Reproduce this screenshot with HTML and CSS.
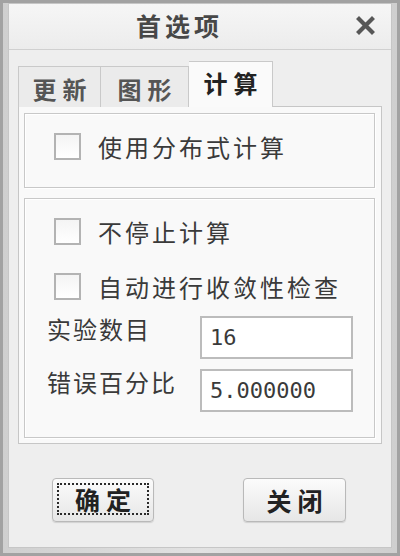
FILE: index.html
```html
<!DOCTYPE html>
<html lang="zh">
<head>
<meta charset="utf-8">
<title>首选项</title>
<link rel="stylesheet" href="styles.css">
</head>
<body>
<div class="window">
  <div class="dialog">
    <div class="titlebar">
      <div class="title"><span class="sp">首选项</span></div>
      <svg class="close" width="19" height="19" viewBox="0 0 19 19"><path d="M3 3 L16 16 M16 3 L3 16" stroke="#575757" stroke-width="4.2" stroke-linecap="square" fill="none"/></svg>
    </div>
    <div class="tabs">
      <div class="tab t1"><span class="sp">更新</span></div>
      <div class="tab t2"><span class="sp">图形</span></div>
      <div class="tab active"><span class="sp">计算</span></div>
    </div>
    <div class="panel">
      <div class="group g1">
        <div class="check"><span class="box"></span><span class="label">使用分布式计算</span></div>
      </div>
      <div class="group g2">
        <div class="check"><span class="box"></span><span class="label">不停止计算</span></div>
        <div class="check c2"><span class="box"></span><span class="label">自动进行收敛性检查</span></div>
        <div class="field f1"><span class="flabel">实验数目</span><span class="input">16</span></div>
        <div class="field f2"><span class="flabel">错误百分比</span><span class="input">5.000000</span></div>
      </div>
    </div>
    <div class="buttons">
      <div class="btn ok"><span class="focus"><span class="sp">确定</span></span></div>
      <div class="btn close-btn"><span class="sp">关闭</span></div>
    </div>
  </div>
</div>
</body>
</html>
```
FILE: styles.css
```css
html, body {
  margin: 0;
  padding: 0;
  background: #a0a0a0;
}
.window {
  width: 400px;
  height: 556px;
  box-sizing: border-box;
  border: 3px solid #a2a2a2;
  padding: 0 5px 5px;
  background: linear-gradient(to right, #cfcfcf, #e2e2e2 50%, #cfcfcf);
  display: flex;
  font-family: "Noto Sans CJK SC", "Noto Sans", sans-serif;
  color: #363636;
}
.dialog {
  flex: 1;
  border: 1px solid #c6c6c6;
  background: #eeeeee;
  display: flex;
  flex-direction: column;
}
.titlebar {
  height: 45px;
  border-bottom: 1px solid #d0d0d0;
  background: linear-gradient(#f6f6f6, #ececec);
  display: flex;
  align-items: center;
  padding-right: 16px;
}
.title {
  flex: 1;
  text-align: center;
  margin-right: 10px;
  font-size: 25px;
  font-weight: bold;
  color: #474747;
  line-height: 30px;
  padding-bottom: 3px;
}
.sp {
  letter-spacing: 4px;
  margin-right: -4px;
}
.close {
  display: block;
  margin-bottom: 2px;
}
.tabs {
  display: flex;
  align-items: flex-end;
  padding: 11px 0 0 9px;
  position: relative;
  z-index: 1;
  margin-bottom: -1px;
}
.tab {
  box-sizing: border-box;
  height: 41px;
  border: 1px solid #c9c9c9;
  border-bottom: none;
  background: #ebebeb;
  font-size: 24px;
  font-weight: bold;
  color: #555;
  display: flex;
  justify-content: center;
  align-items: center;
  padding-top: 2px;
}
.tab .sp {
  letter-spacing: 6px;
  margin-right: -6px;
}
.t1 { width: 83px; }
.t2 { width: 88px; border-left: none; }
.tab.active {
  width: 84px;
  height: 46px;
  background: #fafafa;
  color: #222;
  border-left: none;
  padding-top: 0;
  padding-bottom: 4px;
}
.panel {
  margin: 0 9px;
  height: 338px;
  box-sizing: border-box;
  border: 1px solid #c6c6c6;
  background: #f9f9f9;
  padding: 6px 6px 5px 5px;
  display: flex;
  flex-direction: column;
  gap: 10px;
}
.group {
  box-sizing: border-box;
  border: 1px solid #c8c8c8;
  box-shadow: inset 1px 1px 0 #ffffff, 1px 1px 0 #ffffff;
}
.g1 {
  height: 75px;
  padding: 19px 0 0 29px;
}
.g2 {
  height: 240px;
  padding: 19px 0 0 29px;
  display: flex;
  flex-direction: column;
}
.check {
  display: flex;
  align-items: center;
  height: 27px;
}
.c2 { margin-top: 28px; }
.box {
  box-sizing: border-box;
  width: 27px;
  height: 27px;
  border: 2px solid #b3b3b3;
  background: linear-gradient(#f4f4f4, #ffffff);
}
.label {
  margin-left: 17px;
  font-size: 24px;
  line-height: 27px;
  letter-spacing: 3px;
  color: #3a3a3a;
}
.field {
  display: flex;
  height: 43px;
  margin-left: -7px;
}
.f1 { margin-top: 16px; }
.f2 { margin-top: 10px; }
.flabel {
  width: 153px;
  font-size: 24px;
  line-height: 27px;
  letter-spacing: 2px;
  color: #3a3a3a;
  margin-top: -1px;
}
.input {
  box-sizing: border-box;
  width: 153px;
  height: 43px;
  border: 2px solid #bcbcbc;
  background: #ffffff;
  padding-left: 8px;
  font-family: "DejaVu Sans Mono", "Liberation Mono", monospace;
  font-size: 22px;
  line-height: 39px;
  color: #3a3a3a;
}
.buttons {
  display: flex;
  padding: 34px 0 0 43px;
  gap: 89px;
}
.btn {
  box-sizing: border-box;
  height: 44px;
  border: 1px solid #b9b9b9;
  border-radius: 4px;
  background: linear-gradient(#fbfbfb, #e6e6e6);
  box-shadow: 0 1px 1px rgba(0,0,0,0.12);
  font-size: 25px;
  font-weight: bold;
  color: #222;
  display: flex;
  justify-content: center;
  align-items: center;
}
.btn .sp {
  letter-spacing: 6px;
  margin-right: -6px;
}
.ok {
  width: 102px;
  padding: 4px 4px 6px;
  align-items: stretch;
}
.focus {
  flex: 1;
  border: 2px dotted #2a2a2a;
  display: flex;
  justify-content: center;
  align-items: center;
  line-height: 1;
}
.close-btn {
  width: 103px;
}
```
